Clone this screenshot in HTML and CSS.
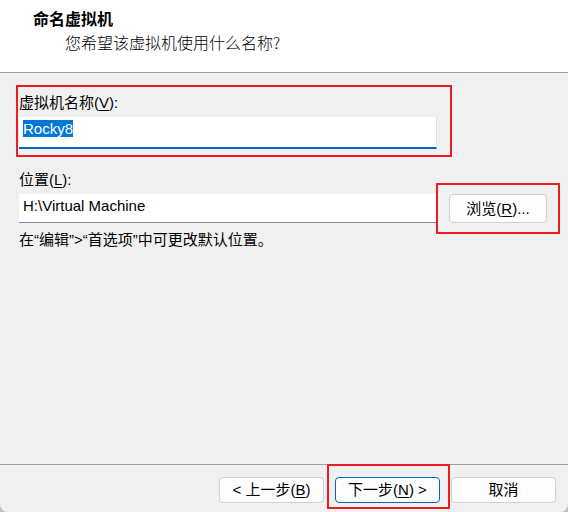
FILE: index.html
```html
<!DOCTYPE html>
<html lang="zh-CN">
<head>
<meta charset="utf-8">
<title>命名虚拟机</title>
<link rel="stylesheet" href="styles.css">
</head>
<body>
<div class="window">
  <header class="header">
    <div class="title">命名虚拟机</div>
    <div class="subtitle">您希望该虚拟机使用什么名称?</div>
  </header>
  <main class="content">
    <div class="label">虚拟机名称(<u>V</u>):</div>
    <div class="field field-focus"><span class="sel">Rocky8</span></div>
    <div class="label label-loc">位置(<u>L</u>):</div>
    <div class="row">
      <div class="field field-loc">H:\Virtual Machine</div>
      <button class="btn btn-browse">浏览(<u>R</u>)...</button>
    </div>
    <div class="hint">在“编辑”&gt;“首选项”中可更改默认位置。</div>
  </main>
  <footer class="footer">
    <button class="btn">&lt; 上一步(<u>B</u>)</button>
    <button class="btn btn-default">下一步(<u>N</u>) &gt;</button>
    <button class="btn">取消</button>
  </footer>
  <div class="mark mark-name"></div>
  <div class="mark mark-browse"></div>
  <div class="mark mark-next"></div>
</div>
</body>
</html>
```

FILE: styles.css
```css
html {
  margin: 0;
  background: #bdbdbd;
}
body {
  margin: 0;
  width: 568px;
  height: 512px;
  overflow: hidden;
  font-family: "Liberation Sans", "Noto Sans CJK SC", sans-serif;
  font-size: 15px;
  color: #000;
}
.window {
  position: relative;
  width: 568px;
  height: 512px;
  background: #f0f0f0;
  border-radius: 0 0 8px 8px;
  display: flex;
  flex-direction: column;
  overflow: hidden;
}
.header {
  height: 72px;
  background: #fff;
  border-bottom: 1px solid #a0a0a0;
  box-sizing: content-box;
}
.title {
  margin-top: 8px;
  padding-left: 33px;
  line-height: 20px;
  font-size: 16px;
  font-weight: bold;
  font-family: "Noto Sans CJK SC", sans-serif;
}
.subtitle {
  margin-top: 4px;
  padding-left: 65px;
  line-height: 20px;
  font-size: 16px;
  font-family: "Noto Sans CJK SC", sans-serif;
  font-weight: 300;
}
.content {
  flex: 1;
  padding: 20px 0 0 19px;
}
.label {
  line-height: 20px;
  height: 20px;
}
.label-loc {
  margin-top: 21px;
}
u {
  text-decoration: underline;
  text-underline-offset: 2px;
}
.field {
  background: #fff;
  box-sizing: border-box;
  padding-left: 4px;
}
.field-focus {
  margin-top: 4px;
  width: 418px;
  height: 32px;
  border-bottom: 2px solid #0067c0;
  border-right: 1px solid #e3e3e3;
  padding-top: 3px;
}
.sel {
  display: inline-block;
  background: #0078d7;
  color: #fff;
  line-height: 17px;
  height: 17px;
}
.row {
  margin-top: 4px;
  display: flex;
  align-items: flex-start;
}
.field-loc {
  width: 417px;
  height: 29px;
  border-bottom: 1px solid #8a8a8a;
  line-height: 24px;
  padding-top: 0;
}
.btn {
  font: inherit;
  color: #000;
  background: #fdfdfd;
  border: 1px solid #d0d0d0;
  border-radius: 4px;
  width: 105px;
  height: 26px;
  padding: 0;
  box-sizing: border-box;
  line-height: 22px;
}
.btn-browse {
  margin-left: 13px;
  width: 98px;
  height: 29px;
}
.btn-default {
  border-color: #0067c0;
}
.hint {
  margin-top: 7px;
  line-height: 20px;
}
.footer {
  height: 47px;
  border-top: 1px solid #a0a0a0;
  display: flex;
  justify-content: flex-end;
  align-items: flex-start;
  gap: 11px;
  padding: 12px 12px 0 0;
  box-sizing: border-box;
  height: 48px;
}
.mark {
  position: absolute;
  border: 2px solid #ec1c24;
  box-sizing: border-box;
}
.mark-name {
  left: 16px;
  top: 85px;
  width: 436px;
  height: 72px;
}
.mark-browse {
  left: 436px;
  top: 183px;
  width: 124px;
  height: 51px;
}
.mark-next {
  left: 327px;
  top: 464px;
  width: 123px;
  height: 45px;
}
```
